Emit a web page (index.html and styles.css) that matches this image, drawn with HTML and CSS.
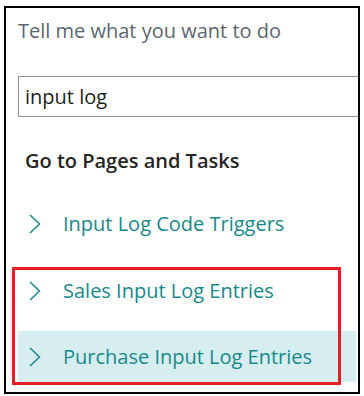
FILE: index.html
```html
<!DOCTYPE html>
<html lang="en">
<head>
<meta charset="utf-8">
<title>Tell me what you want to do</title>
<link rel="stylesheet" href="styles.css">
</head>
<body>
<div class="frame">
  <div class="title">Tell me what you want to do</div>
  <input class="search" type="text" value="input log">
  <div class="heading">Go to Pages and Tasks</div>
  <div class="list">
    <div class="item">
      <svg class="chev" width="12" height="20" viewBox="0 0 12 20"><path d="M1 1 L10.5 10 L1 19" fill="none" stroke="#16898c" stroke-width="1.5"/></svg>
      <span>Input Log Code Triggers</span>
    </div>
    <div class="item item-b">
      <svg class="chev" width="12" height="20" viewBox="0 0 12 20"><path d="M1 1 L10.5 10 L1 19" fill="none" stroke="#16898c" stroke-width="1.5"/></svg>
      <span>Sales Input Log Entries</span>
    </div>
    <div class="item item-c active">
      <svg class="chev" width="12" height="20" viewBox="0 0 12 20"><path d="M1 1 L10.5 10 L1 19" fill="none" stroke="#16898c" stroke-width="1.5"/></svg>
      <span>Purchase Input Log Entries</span>
    </div>
    <div class="callout"></div>
  </div>
</div>
</body>
</html>
```
FILE: styles.css
```css
html, body {
  margin: 0;
  padding: 0;
  background: #ffffff;
}
body {
  font-family: "Open Sans", "Noto Sans", sans-serif;
}
.frame {
  box-sizing: border-box;
  margin: 6px 0 0 4px;
  width: 356px;
  height: 388px;
  border: 2px solid #000;
  overflow: hidden;
}
.title {
  margin-top: 9px;
  padding-left: 12px;
  font-size: 20px;
  line-height: 28px;
  color: #5c6670;
}
.search {
  display: block;
  box-sizing: border-box;
  margin: 31px 0 0 12px;
  width: 345px;
  height: 41px;
  padding: 0 0 0 6px;
  border: 1px solid #8a949f;
  outline: none;
  font-family: "Open Sans", "Noto Sans", sans-serif;
  font-size: 20px;
  color: #1e1e1e;
  background: #fff;
}
.heading {
  margin-top: 30px;
  padding-left: 19px;
  font-size: 20px;
  font-weight: 600;
  line-height: 28px;
  color: #252525;
}
.list {
  position: relative;
  margin-top: 23px;
}
.item {
  display: flex;
  align-items: center;
  gap: 22px;
  box-sizing: border-box;
  margin-left: 12px;
  width: 338px;
  height: 51px;
  padding-left: 11px;
  font-size: 20px;
  line-height: 28px;
  color: #16898c;
}
.item-b { margin-top: 16px; }
.item-c { margin-top: 15px; }
.active { background: #d7eef0; }
.chev { flex: none; display: block; }
.callout {
  position: absolute;
  top: 69px;
  left: 6px;
  width: 329px;
  height: 118px;
  box-sizing: border-box;
  border: 3px solid #e81c24;
  pointer-events: none;
}
```
